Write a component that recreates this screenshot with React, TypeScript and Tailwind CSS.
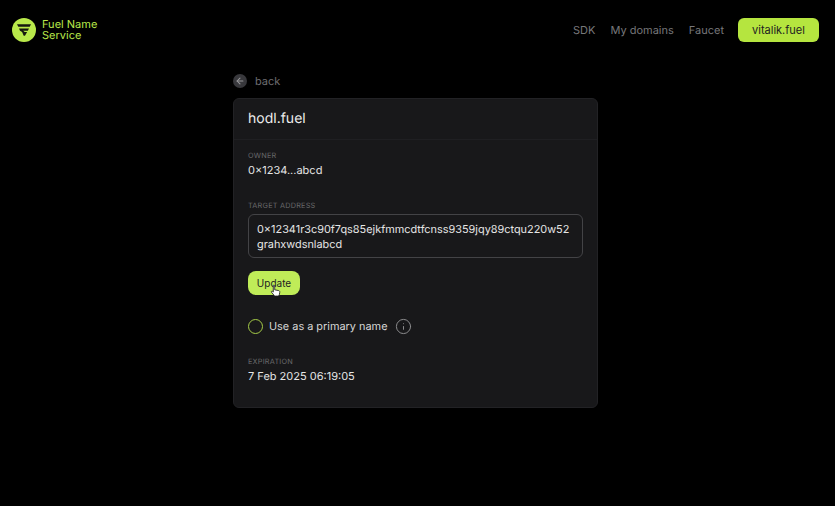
import { ArrowLeft, Info } from 'lucide-react'

const font = { fontFamily: 'Inter, sans-serif' }

function Logo() {
  return (
    <svg width="24" height="24" viewBox="0 0 24 24" className="shrink-0">
      <circle cx="12" cy="12" r="12" fill="#b9e94a" />
      <path d="M5 6.2h14l-1.3 2.6H6.3z" fill="#16180f" />
      <path d="M7 10.4h10l-1.2 2.3h-4.6l1.5 1.2h2.4l-2.1 3.9h-1.3l-1.6-3.7L8 12.7z" fill="#16180f" />
    </svg>
  )
}

function Field({ label, value }: { label: string; value: string }) {
  return (
    <div>
      <div className="text-[7.3px] leading-[10px] uppercase tracking-[0.03em] text-[#68686a]">{label}</div>
      <div className="text-[11px] leading-[16px] mt-[1px] text-[#e6e6e6]">{value}</div>
    </div>
  )
}

export default function App() {
  return (
    <div className="min-h-[506px] bg-black [text-rendering:geometricPrecision]" style={font}>
      <header className="flex items-center justify-between h-[60px] pl-3 pr-4">
        <div className="flex items-center gap-[6px]">
          <Logo />
          <div className="text-[11px] leading-[11.5px] text-[#b9e94a]">
            <div>Fuel Name</div>
            <div>Service</div>
          </div>
        </div>
        <nav className="flex items-center text-[11px] text-[#77777a]">
          <span>SDK</span>
          <span className="ml-[15px]">My domains</span>
          <span className="ml-[15px]">Faucet</span>
          <button className="ml-[14px] h-6 w-[81px] rounded-md bg-[#b5e53f] text-[#222] text-[11px]">vitalik.fuel</button>
        </nav>
      </header>

      <main className="w-[365px] ml-[233px]">
        <div className="flex items-center h-[14px] mt-[14px] gap-2">
          <span className="flex items-center justify-center w-[14px] h-[14px] rounded-full bg-[#38383c]">
            <ArrowLeft size={10} strokeWidth={2.5} color="#9a9a9c" />
          </span>
          <span className="text-[11px] text-[#6d6d70]">back</span>
        </div>

        <section className="mt-[10px] h-[310px] rounded-md border border-[#222225] bg-[#18181a]">
          <div className="h-[41px] flex items-center pl-[14px] pb-[2px] border-b border-[#1f1f22] text-[14px] text-[#ececec]">
            hodl.fuel
          </div>
          <div className="px-[14px] pt-[11px]">
            <Field label="Owner" value="0×1234...abcd" />

            <div className="mt-[23px] text-[7.3px] leading-[10px] uppercase tracking-[0.03em] text-[#68686a]">Target address</div>
            <div className="mt-[3px] h-[44px] w-[335px] rounded-md border border-[#434346] px-[8px] py-[7px] text-[10.9px] leading-[15px] text-[#e6e6e6] whitespace-nowrap">
              0×12341r3c90f7qs85ejkfmmcdtfcnss9359jqy89ctqu220w52
              <br />
              grahxwdsnlabcd
            </div>

            <div className="relative mt-[13px] w-[52px]">
              <button className="block h-6 w-[52px] rounded-lg bg-[#bfec58] text-[10px] text-[#222]">Update</button>
              <svg width="12" height="14" viewBox="0 0 11 13" className="absolute left-[22px] top-[13px]">
                <path d="M3 1.2c.6-.5 1.3 0 1.3.6v3.6l3.6.7c.8.2 1.2.8 1.1 1.6l-.4 2.2c-.1.7-.6 1.3-1.3 1.3H5c-.6 0-1-.3-1.4-.8L1.3 7.6c-.4-.6.3-1.3 1-.8l.7.6z" fill="#fff" stroke="#222" strokeWidth="0.8" />
              </svg>
            </div>

            <div className="flex items-center mt-[23px]">
              <span className="w-[15px] h-[15px] rounded-full border border-[#a5cc48]" />
              <span className="ml-[6px] text-[10.9px] text-[#d6d6d6]">Use as a primary name</span>
              <Info size={17} strokeWidth={1.4} color="#8c8c8e" className="ml-[7px]" />
            </div>

            <div className="mt-[22px]">
              <Field label="Expiration" value="7 Feb 2025 06:19:05" />
            </div>
          </div>
        </section>
      </main>
    </div>
  )
}
